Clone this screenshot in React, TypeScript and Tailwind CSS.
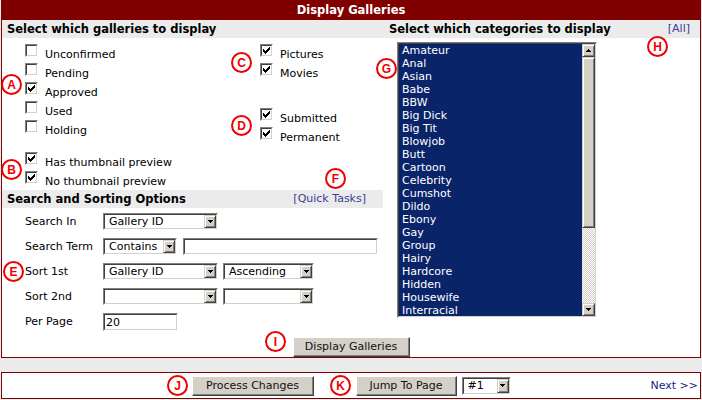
import React from "react";

const CHECK_PX: [number, number][] = [
  [6, 0], [5, 1], [6, 1], [0, 2], [4, 2], [5, 2], [6, 2], [0, 3], [1, 3], [3, 3], [4, 3], [5, 3],
  [0, 4], [1, 4], [2, 4], [3, 4], [4, 4], [1, 5], [2, 5], [3, 5], [2, 6],
];

function Check() {
  return (
    <svg width="7" height="7" viewBox="0 0 7 7" shapeRendering="crispEdges">
      {CHECK_PX.map(([x, y], i) => (
        <rect key={i} x={x} y={y} width="1" height="1" fill="#000" />
      ))}
    </svg>
  );
}

function Box({ checked }: { checked?: boolean }) {
  return (
    <div className="w-[13px] h-[13px] shrink-0 border border-t-[#808080] border-l-[#808080] border-r-white border-b-white">
      <div className="w-full h-full border border-t-[#404040] border-l-[#404040] border-r-[#d4d0c8] border-b-[#d4d0c8] bg-white flex items-center justify-center">
        {checked && <Check />}
      </div>
    </div>
  );
}

function CB({ label, checked }: { label: string; checked?: boolean }) {
  return (
    <div className="h-[19px] flex items-start gap-[7px]">
      <Box checked={checked} />
      <span className="leading-[19px] mt-[1px] whitespace-nowrap">{label}</span>
    </div>
  );
}

function Arrow({ up }: { up?: boolean }) {
  return (
    <svg width="7" height="4" viewBox="0 0 7 4" shapeRendering="crispEdges">
      {up ? (
        <>
          <rect x="3" y="0" width="1" height="1" fill="#000" />
          <rect x="2" y="1" width="3" height="1" fill="#000" />
          <rect x="1" y="2" width="5" height="1" fill="#000" />
        </>
      ) : (
        <>
          <rect x="1" y="0" width="5" height="1" fill="#000" />
          <rect x="2" y="1" width="3" height="1" fill="#000" />
          <rect x="3" y="2" width="1" height="1" fill="#000" />
        </>
      )}
    </svg>
  );
}

function SBtn({ up, className }: { up?: boolean; className?: string }) {
  return (
    <div
      className={
        "bg-[#d4d0c8] border border-t-[#d4d0c8] border-l-[#d4d0c8] border-r-[#404040] border-b-[#404040] shadow-[inset_1px_1px_0_#ffffff,inset_-1px_-1px_0_#808080] flex items-center justify-center " +
        (className ?? "")
      }
    >
      <Arrow up={up} />
    </div>
  );
}

function Inset({ className, children }: { className?: string; children?: React.ReactNode }) {
  return (
    <div
      className={
        "border border-t-[#808080] border-l-[#808080] border-r-white border-b-white " + (className ?? "")
      }
    >
      <div className="w-full h-full border border-t-[#404040] border-l-[#404040] border-r-[#d4d0c8] border-b-[#d4d0c8] bg-white flex">
        {children}
      </div>
    </div>
  );
}

function Sel({ className, value }: { className: string; value?: string }) {
  return (
    <Inset className={"h-[17px] shrink-0 " + className}>
      <div className="flex-1 pl-[4px] leading-[14px] whitespace-nowrap overflow-hidden">{value ?? ""}</div>
      <SBtn className="w-[12px] h-full" />
    </Inset>
  );
}

function Btn({ className, children }: { className: string; children: React.ReactNode }) {
  return (
    <div
      className={
        "h-[20px] bg-[#d4d0c8] border border-t-white border-l-white border-r-[#404040] border-b-[#404040] shadow-[inset_-1px_-1px_0_#808080] flex items-center justify-center pt-[1px] text-[#111] whitespace-nowrap " +
        className
      }
    >
      {children}
    </div>
  );
}

function Ann({ l, className }: { l: string; className: string }) {
  return (
    <div
      className={
        "absolute w-[21px] h-[21px] rounded-full border-2 border-[#ee0000] bg-white text-[#ee0000] font-bold text-[12px] leading-none flex items-center justify-center font-['Liberation_Sans',Arial,sans-serif] " +
        className
      }
    >
      {l}
    </div>
  );
}

const CATS = [
  "Amateur", "Anal", "Asian", "Babe", "BBW", "Big Dick", "Big Tit", "Blowjob", "Butt", "Cartoon",
  "Celebrity", "Cumshot", "Dildo", "Ebony", "Gay", "Group", "Hairy", "Hardcore", "Hidden", "Housewife",
  "Interracial",
];

export default function App() {
  return (
    <div className="relative w-[702px] h-[400px] overflow-hidden bg-[#ebebeb] font-['DejaVu_Sans',Verdana,sans-serif] text-[11px] text-black">
      {/* main panel */}
      <div className="ml-px w-[700px] h-[358px] border border-[#800000] bg-white flex flex-col">
        <div className="h-[19px] bg-[#800000] text-white font-bold text-[11.5px] flex items-center justify-center pt-[1px]">
          Display Galleries
        </div>
        <div className="h-[18px] bg-[#ebebeb] flex items-center font-bold text-[11.5px] pt-[1px]">
          <div className="w-[381px] pl-[5px]">Select which galleries to display</div>
          <div className="flex-1 flex items-center justify-between pl-[6px] pr-[10px]">
            <span>Select which categories to display</span>
            <span className="font-normal text-[11px] text-[#3c3c96]">[All]</span>
          </div>
        </div>
        <div className="flex">
          {/* left column */}
          <div className="w-[381px] shrink-0">
            <div className="h-[152px] flex">
              <div className="w-[258px] pl-[23px] pt-[6px]">
                <CB label="Unconfirmed" />
                <CB label="Pending" />
                <CB label="Approved" checked />
                <CB label="Used" />
                <CB label="Holding" />
                <div className="mt-[13px]">
                  <CB label="Has thumbnail preview" checked />
                  <CB label="No thumbnail preview" checked />
                </div>
              </div>
              <div className="pt-[6px]">
                <CB label="Pictures" checked />
                <CB label="Movies" checked />
                <div className="mt-[26px]">
                  <CB label="Submitted" checked />
                  <CB label="Permanent" checked />
                </div>
              </div>
            </div>
            <div className="h-[18px] bg-[#ebebeb] flex items-center justify-between pl-[5px] pr-[17px] pt-[1px]">
              <span className="font-bold text-[11.5px]">Search and Sorting Options</span>
              <span className="text-[#3c3c96]">[Quick Tasks]</span>
            </div>
            <div className="pl-[23px] pt-[1px]">
              <div className="h-[25px] flex items-center">
                <div className="w-[78px] pt-[1px]">Search In</div>
                <Sel className="w-[115px]" value="Gallery ID" />
              </div>
              <div className="h-[25px] flex items-center">
                <div className="w-[78px] pt-[1px] whitespace-nowrap">Search Term</div>
                <Sel className="w-[74px]" value="Contains" />
                <Inset className="ml-[6px] w-[195px] h-[17px]" />
              </div>
              <div className="h-[25px] flex items-center">
                <div className="w-[78px] pt-[1px]">Sort 1st</div>
                <Sel className="w-[115px]" value="Gallery ID" />
                <Sel className="ml-[5px] w-[91px]" value="Ascending" />
              </div>
              <div className="h-[25px] flex items-center">
                <div className="w-[78px] pt-[1px]">Sort 2nd</div>
                <Sel className="w-[115px]" />
                <Sel className="ml-[5px] w-[91px]" />
              </div>
              <div className="h-[25px] flex items-center">
                <div className="w-[78px] pt-[1px]">Per Page</div>
                <Inset className="w-[75px] h-[18px]">
                  <div className="pl-[1px] leading-[15px]">20</div>
                </Inset>
              </div>
            </div>
          </div>
          {/* right column */}
          <div className="flex-1 pl-[14px] pt-[4px]">
            <div className="w-[200px] h-[276px] border border-t-[#808080] border-l-[#808080] border-r-white border-b-white">
              <div className="w-full h-full border border-t-[#404040] border-l-[#404040] border-r-[#d4d0c8] border-b-[#d4d0c8] flex">
                <div className="flex-1 bg-[#0a246a] text-white pl-[3px] overflow-hidden">
                  {CATS.map((c) => (
                    <div key={c} className="h-[13px] leading-[13px] whitespace-nowrap">
                      {c}
                    </div>
                  ))}
                </div>
                <div className="w-[13px] flex flex-col">
                  <SBtn up className="h-[13px] shrink-0" />
                  <div className="h-[171px] shrink-0 bg-[#d4d0c8] border border-t-[#d4d0c8] border-l-[#d4d0c8] border-r-[#404040] border-b-[#404040] shadow-[inset_1px_1px_0_#ffffff,inset_-1px_-1px_0_#808080]" />
                  <div className="flex-1 bg-[repeating-conic-gradient(#d4d0c8_0_25%,#ffffff_0_50%)] bg-[length:2px_2px]" />
                  <SBtn className="h-[13px] shrink-0" />
                </div>
              </div>
            </div>
          </div>
        </div>
        <div className="flex justify-center mt-[3px]">
          <Btn className="w-[117px]">Display Galleries</Btn>
        </div>
      </div>

      {/* bottom bar */}
      <div className="ml-px mt-[14px] w-[700px] h-[27px] border border-[#800000] bg-white grid grid-cols-[1fr_auto_1fr] items-center">
        <div />
        <div className="flex items-center">
          <Btn className="w-[122px]">Process Changes</Btn>
          <Btn className="ml-[42px] w-[101px]">Jump To Page</Btn>
          <Sel className="ml-[5px] w-[49px] h-[18px]" value="#1" />
        </div>
        <div className="text-right pr-[2px] pt-[1px] text-[#1a1a80]">Next &gt;&gt;</div>
      </div>

      <Ann l="A" className="left-[1px] top-[74px]" />
      <Ann l="B" className="left-[1px] top-[159px]" />
      <Ann l="C" className="left-[231px] top-[52px]" />
      <Ann l="D" className="left-[231px] top-[115px]" />
      <Ann l="E" className="left-[3px] top-[261px]" />
      <Ann l="F" className="left-[325px] top-[168px]" />
      <Ann l="G" className="left-[376px] top-[58px]" />
      <Ann l="H" className="left-[647px] top-[36px]" />
      <Ann l="I" className="left-[265px] top-[331px]" />
      <Ann l="J" className="left-[167px] top-[375px]" />
      <Ann l="K" className="left-[330px] top-[375px]" />
    </div>
  );
}
